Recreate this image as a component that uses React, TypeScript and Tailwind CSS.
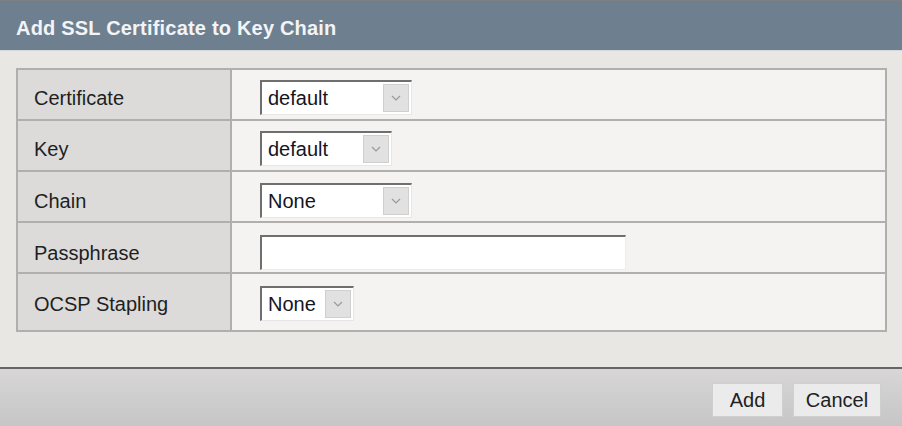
const rows = [
  { label: "Certificate", kind: "select", value: "default", width: "w-[152px]", pt: "pt-[10px]", h: "h-[51px]" },
  { label: "Key", kind: "select", value: "default", width: "w-[132px]", pt: "pt-[10px]", h: "h-[51px]" },
  { label: "Chain", kind: "select", value: "None", width: "w-[152px]", pt: "pt-[11px]", h: "h-[51px]" },
  { label: "Passphrase", kind: "input", value: "", width: "w-[366px]", pt: "pt-[12px]", h: "h-[51px]" },
  { label: "OCSP Stapling", kind: "select", value: "None", width: "w-[94px]", pt: "pt-[12px]", h: "h-[56px]" },
] as const;

function Chevron() {
  return (
    <svg width="10" height="6" viewBox="0 0 10 6" aria-hidden="true">
      <path d="M1 1 L5 5 L9 1" fill="none" stroke="#9a9a9a" strokeWidth="1.2" />
    </svg>
  );
}

function FakeSelect({ value, width }: { value: string; width: string }) {
  return (
    <div
      className={`flex h-[35px] ${width} items-center border-t-2 border-l-2 border-b border-r border-t-[#6f6f6f] border-l-[#6f6f6f] border-b-[#e6e6e6] border-r-[#e6e6e6] bg-white pl-[6px] pr-[2px]`}
    >
      <span className="flex-1 text-[20px] leading-none text-[#15151f]">{value}</span>
      <span className="flex h-[28px] w-[26px] items-center justify-center border border-[#cfcfcf] bg-[#e1e1e1]">
        <Chevron />
      </span>
    </div>
  );
}

export default function App() {
  return (
    <div
      className="flex h-[426px] w-[902px] flex-col bg-[#e8e7e4]"
      style={{ fontFamily: '"Liberation Sans", Arial, sans-serif' }}
    >
      <div className="flex h-[50px] items-center border-t border-[#7c7f86] bg-[#6e7f90] pl-[16px] pt-[4px]">
        <h1 className="text-[20px] font-bold tracking-[0.2px] text-[#f2f4f6]">
          Add SSL Certificate to Key Chain
        </h1>
      </div>
      <div className="h-px bg-[#d4d8dc]" />

      <div className="flex-1 pl-[16px] pr-[15px] pt-[17px]">
        <div className="border-2 border-[#b0afad]">
          {rows.map((row, i) => (
            <div
              key={row.label}
              className={`grid grid-cols-[214px_1fr] ${row.h} ${
                i < rows.length - 1 ? "border-b-2 border-[#b0afad]" : ""
              }`}
            >
              <div className={`border-r-2 border-[#b0afad] bg-[#dcdbd9] pl-[16px] ${row.pt}`}>
                <div className="flex h-[35px] items-center text-[20px] text-[#1f1f1f]">
                  {row.label}
                </div>
              </div>
              <div className={`bg-[#f4f3f1] pl-[28px] ${row.pt}`}>
                {row.kind === "select" ? (
                  <FakeSelect value={row.value} width={row.width} />
                ) : (
                  <div
                    className={`h-[35px] ${row.width} border-t-2 border-l-2 border-b border-r border-t-[#6f6f6f] border-l-[#6f6f6f] border-b-[#ececec] border-r-[#ececec] bg-white`}
                  />
                )}
              </div>
            </div>
          ))}
        </div>
      </div>

      <div className="h-[2px] bg-[#666666]" />
      <div className="flex h-[57px] items-start justify-end gap-[10px] bg-gradient-to-b from-[#d8d6d6] to-[#c6c6c6] pr-[21px] pt-[14px]">
        <button className="h-[34px] w-[71px] border border-[#cfcfcf] bg-[#ebebeb] text-[20px] text-[#222]">
          Add
        </button>
        <button className="h-[34px] w-[88px] border border-[#cfcfcf] bg-[#ebebeb] text-[20px] text-[#222]">
          Cancel
        </button>
      </div>
    </div>
  );
}
